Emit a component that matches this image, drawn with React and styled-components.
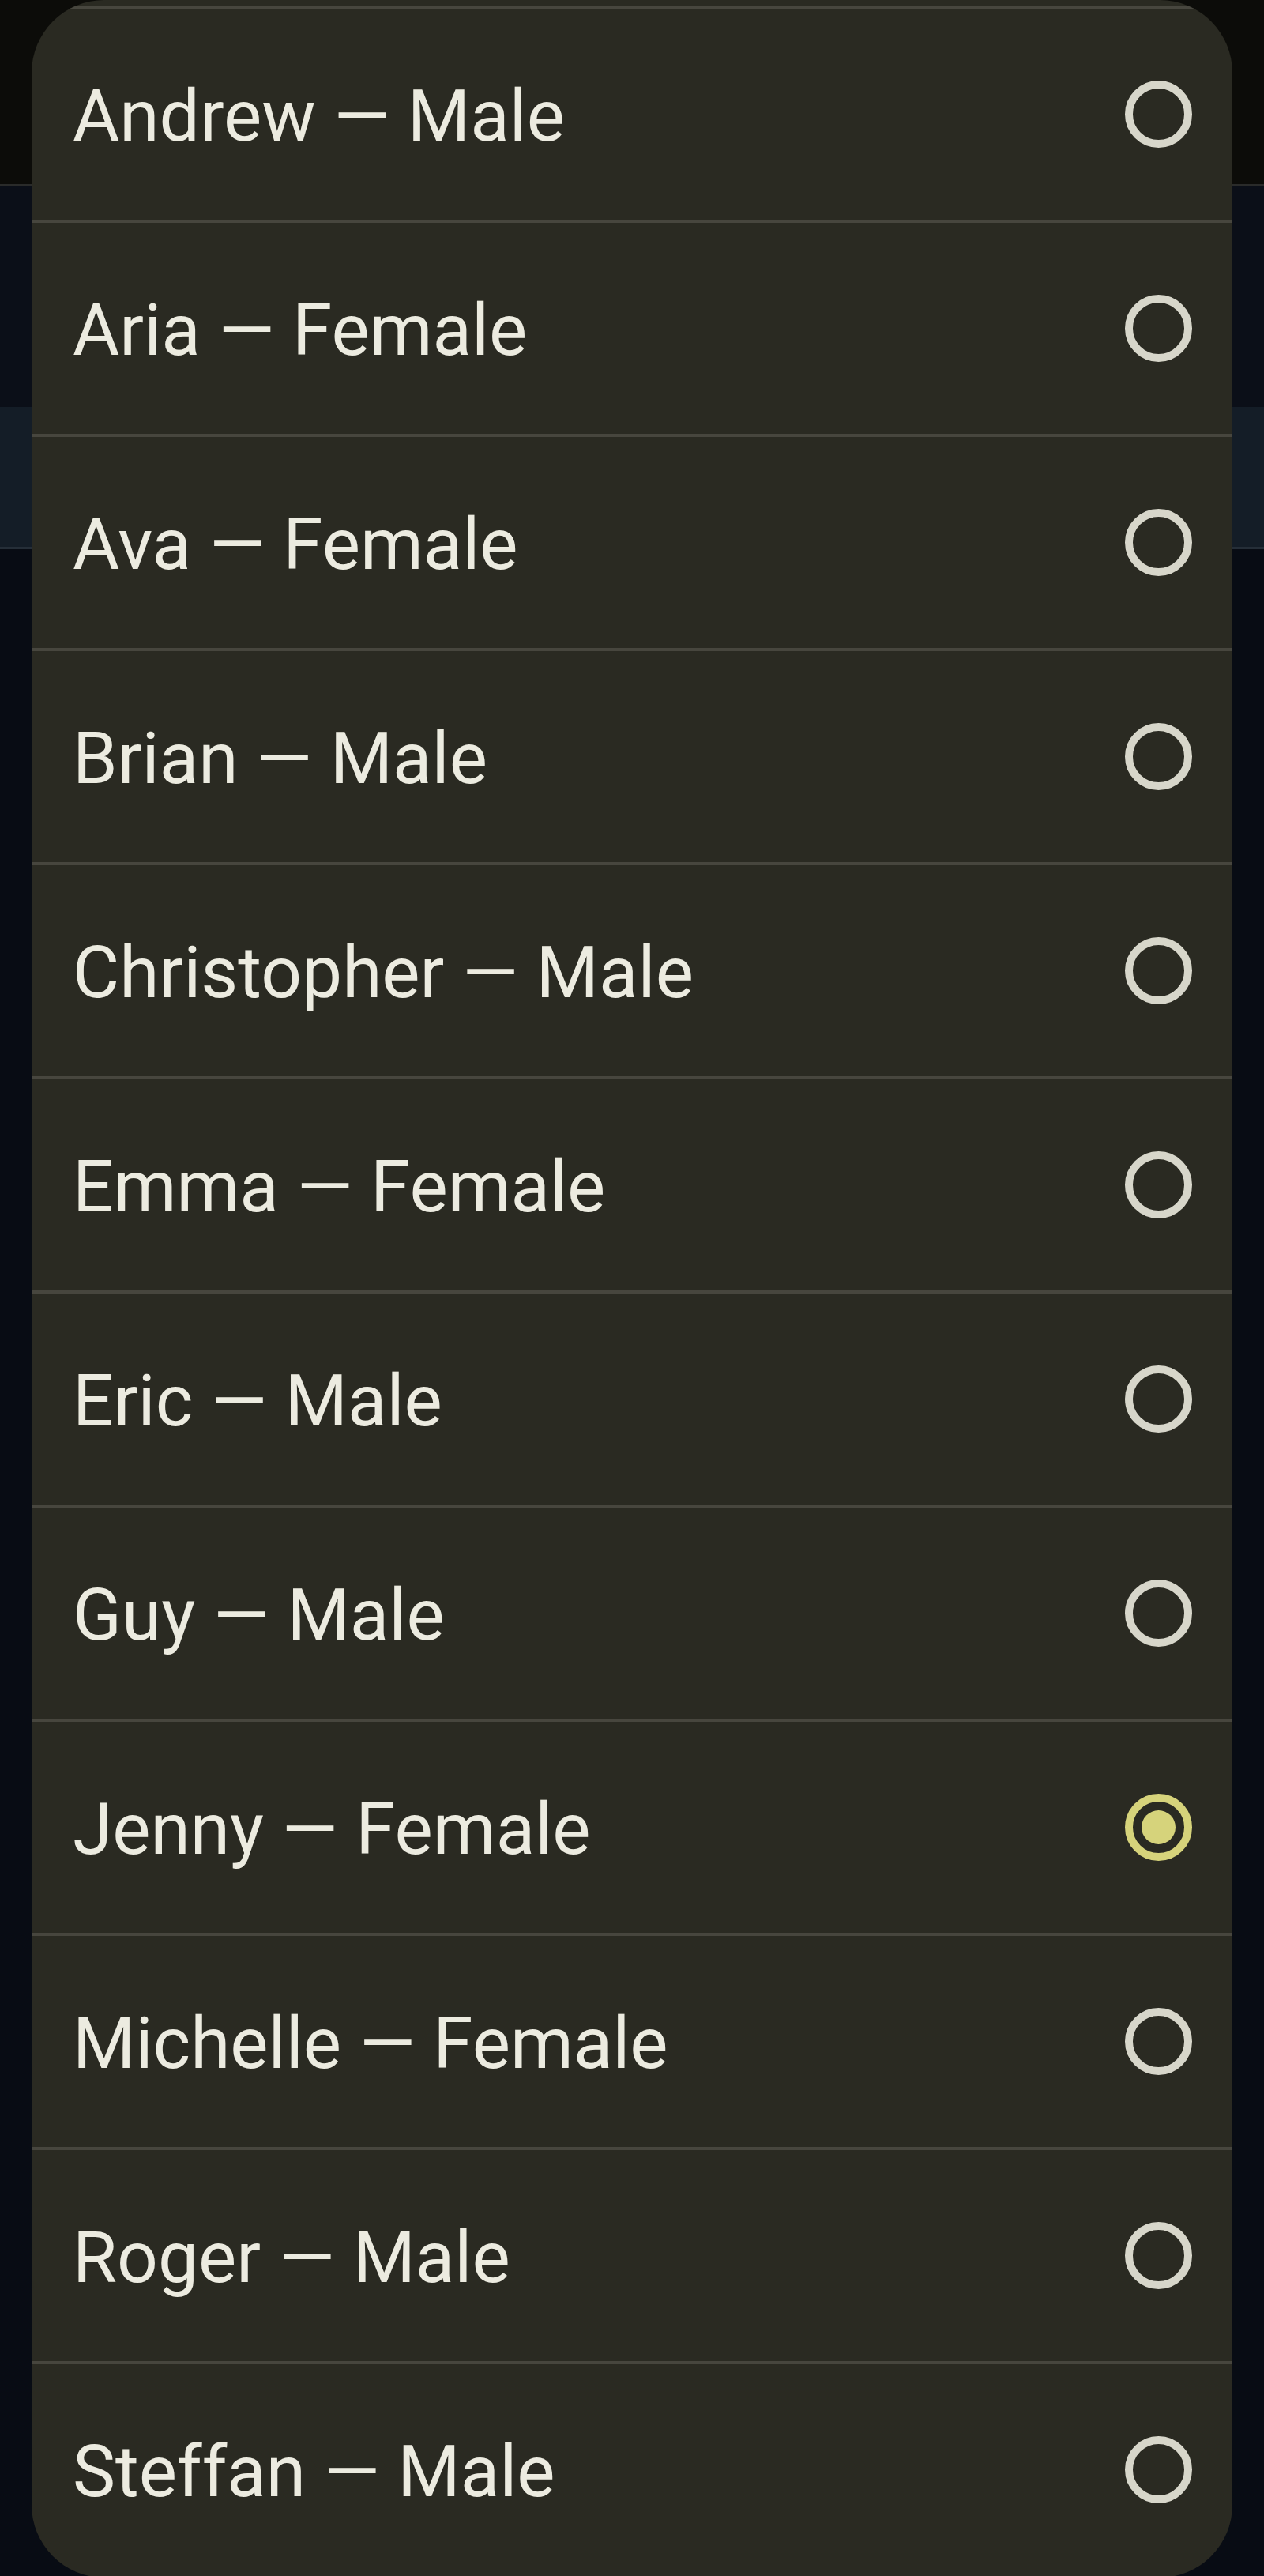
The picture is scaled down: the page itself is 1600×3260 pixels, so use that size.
import React from 'react';
import styled, { createGlobalStyle } from 'styled-components';

const GlobalStyle = createGlobalStyle`
  html, body {
    margin: 0;
    padding: 0;
    background: #080c14;
  }
  body {
    font-family: Roboto, "Noto Sans", "Liberation Sans", sans-serif;
  }
`;

const Page = styled.div`
  position: relative;
  width: 1600px;
  height: 3260px;
  overflow: hidden;
  background: #080c14;
`;

const AppBar = styled.div`
  height: 233px;
  background: #0c0c09;
  border-bottom: 3px solid #2a2b2a;
`;

const Band = styled.div`
  height: ${p => p.h}px;
  background: ${p => p.bg};
  border-bottom: ${p => (p.line ? `3px solid ${p.line}` : 'none')};
`;

const Sheet = styled.div`
  position: absolute;
  left: 40px;
  top: 0;
  width: 1520px;
  height: 3262px;
  background: #2a2a22;
  border-radius: 92px;
  overflow: hidden;
  padding-top: 7px;
  box-sizing: border-box;
`;

const VoiceList = styled.ul`
  list-style: none;
  margin: 0;
  padding: 0;
`;

const VoiceRow = styled.li`
  box-sizing: border-box;
  height: 271px;
  border-top: 4px solid #47463e;
  display: flex;
  align-items: center;
  justify-content: space-between;
  padding: 0 51px 0 52px;
`;

const VoiceName = styled.span`
  font-size: 91px;
  color: #ecebe0;
  line-height: 1;
  padding-top: 6px;
`;

const Radio = styled.span`
  box-sizing: border-box;
  width: 85px;
  height: 85px;
  border-radius: 50%;
  border: 10px solid ${p => (p.checked ? '#d6d37b' : '#d7d6ca')};
  display: flex;
  align-items: center;
  justify-content: center;
  &::after {
    content: '';
    display: ${p => (p.checked ? 'block' : 'none')};
    width: 43px;
    height: 43px;
    border-radius: 50%;
    background: #d6d37b;
  }
`;

const voices = [
  ['Andrew', 'Male'],
  ['Aria', 'Female'],
  ['Ava', 'Female'],
  ['Brian', 'Male'],
  ['Christopher', 'Male'],
  ['Emma', 'Female'],
  ['Eric', 'Male'],
  ['Guy', 'Male'],
  ['Jenny', 'Female'],
  ['Michelle', 'Female'],
  ['Roger', 'Male'],
  ['Steffan', 'Male'],
];

const selected = 'Jenny';

export default function App() {
  return (
    <Page>
      <GlobalStyle />
      <AppBar />
      <Band h={279} bg="#0b0f18" />
      <Band h={177} bg="#141d27" line="#252e38" />

      <Sheet>
        <VoiceList>
          {voices.map(([name, gender]) => (
            <VoiceRow key={name}>
              <VoiceName>{name} — {gender}</VoiceName>
              <Radio checked={name === selected} />
            </VoiceRow>
          ))}
        </VoiceList>
      </Sheet>
    </Page>
  );
}
